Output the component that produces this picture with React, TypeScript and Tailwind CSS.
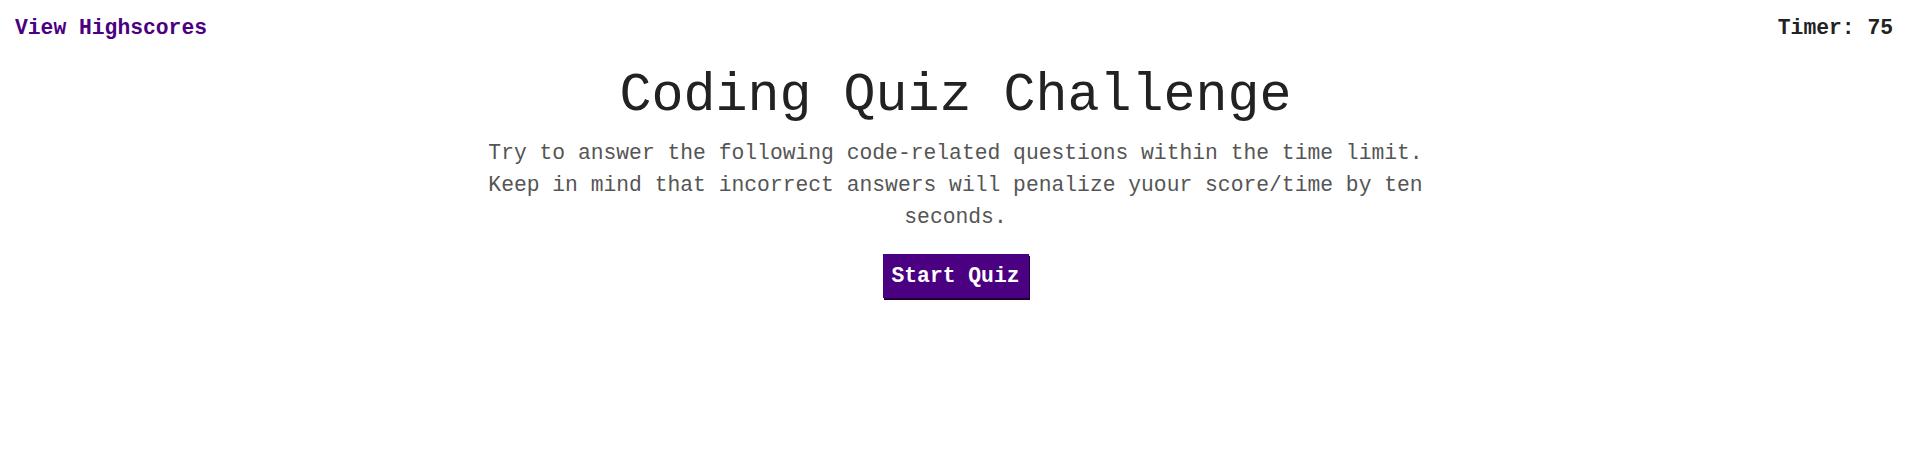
export default function App() {
  return (
    <div className="min-h-screen bg-white font-['Liberation_Mono','Courier_New',monospace] text-[21.33px]">
      {/* top bar */}
      <header className="flex items-center justify-between pl-[15px] pr-[18px] pt-[16px]">
        <a href="#" className="font-bold text-[#4b0082] leading-[24px]">
          View Highscores
        </a>
        <span className="font-bold text-[#222] leading-[24px]">Timer: 75</span>
      </header>

      <main className="mx-auto flex max-w-[960px] flex-col items-center text-center">
        <h1 className="mt-[26px] text-[53.33px] leading-[60px] font-normal text-[#222]">
          Coding Quiz Challenge
        </h1>
        <p className="mt-[11px] leading-[32px] text-[#555]">
          Try to answer the following code-related questions within the time limit.
          Keep in mind that incorrect answers will penalize yuour score/time by ten
          seconds.
        </p>
        <button className="mt-[21px] h-[44px] bg-[#4b0082] px-[9px] font-bold text-white leading-[24px] shadow-[1px_2px_0_#1f0033]">
          Start Quiz
        </button>
      </main>
    </div>
  );
}
